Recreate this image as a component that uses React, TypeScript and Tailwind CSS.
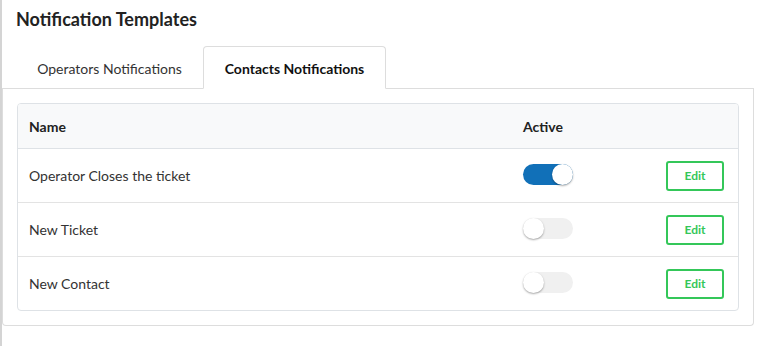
import React from "react";

function Toggle({ on }: { on: boolean }) {
  return (
    <div
      className={`relative w-[50px] h-[21px] rounded-full ${on ? "bg-[#1170b8]" : "bg-[#f0f0f0]"}`}
    >
      <div
        className={`absolute top-0 w-[21px] h-[21px] rounded-full bg-white shadow-[0_1px_2px_rgba(0,0,0,0.35)] ${on ? "left-[29px]" : "left-0"}`}
      />
    </div>
  );
}

const rows = [
  { name: "Operator Closes the ticket", on: true },
  { name: "New Ticket", on: false },
  { name: "New Contact", on: false },
];

export default function App() {
  return (
    <div
      className="w-[763px] h-[346px] bg-white flex text-[#212529]"
      style={{ fontFamily: "Lato, 'Open Sans', sans-serif" }}
    >
      <div className="w-[2px] bg-[#d4d4d4] shrink-0" />
      <div className="flex-1 flex flex-col">
        <h1 className="text-[18px] font-bold text-[#222] pl-[14px] pt-[6px] h-[46px] leading-[26px]">
          Notification Templates
        </h1>
        <div className="flex border-b border-[#dddddd] w-[752px] h-[43px] pl-[1px]">
          <div className="w-[200px] flex items-center justify-center text-[14px] text-[#333] pt-[2px] pl-[13px]">
            Operators Notifications
          </div>
          <div className="w-[183px] h-[43px] -mb-[1px] bg-white border border-[#dddddd] border-b-white rounded-t-[4px] flex items-center justify-center text-[14px] font-bold text-[#111] pt-[2px]">
            Contacts Notifications
          </div>
        </div>
        <div className="w-[752px] border border-t-0 border-[#dddddd] rounded-b-[4px] px-[14px] pt-[14px] pb-[14px]">
          <div className="border border-[#dee2e6] rounded-[4px] overflow-hidden">
            <div className="flex items-center h-[45px] bg-[#f8f9fa] border-b border-[#dee2e6] text-[14px] font-bold text-[#222]">
              <div className="pl-[11px] w-[505px]">Name</div>
              <div>Active</div>
            </div>
            {rows.map((r, i) => (
              <div
                key={r.name}
                className={`flex items-center text-[14px] text-[#333] ${i < rows.length - 1 ? "h-[54px] border-b border-[#e3e3e3]" : "h-[53px]"}`}
              >
                <div className="pl-[11px] w-[505px]">{r.name}</div>
                <div className="w-[143px] mb-[3px]">
                  <Toggle on={r.on} />
                </div>
                <button className="w-[58px] h-[30px] border-2 border-[#34c759] rounded-[3px] text-[#34c759] text-[12px] font-bold flex items-center justify-center">
                  Edit
                </button>
              </div>
            ))}
          </div>
        </div>
      </div>
    </div>
  );
}
